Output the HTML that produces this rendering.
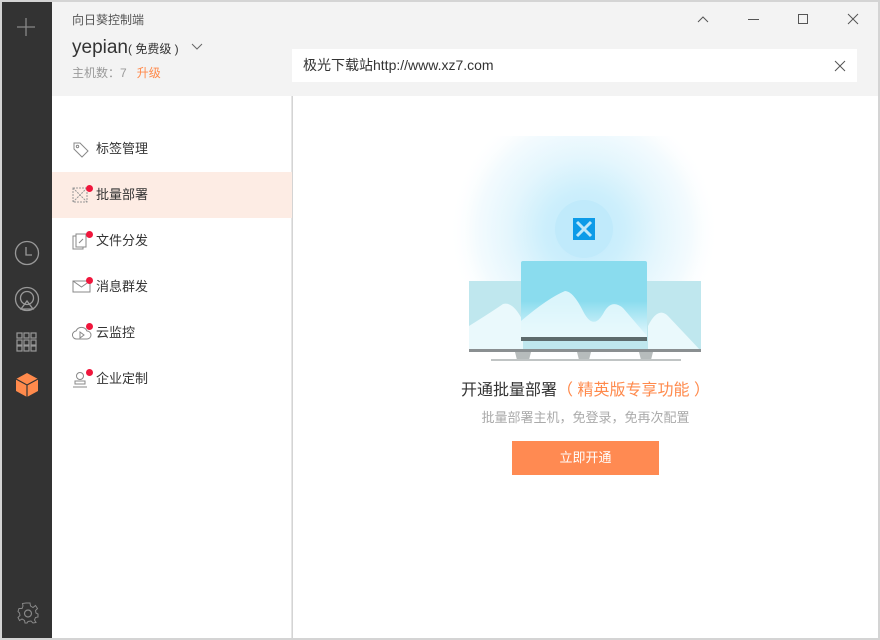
<!DOCTYPE html>
<html><head><meta charset="utf-8"><style>
*{margin:0;padding:0;box-sizing:border-box}
body{width:880px;height:640px;background:#d4d4d4;font-family:"Liberation Sans","Noto Sans CJK SC",sans-serif;position:relative;overflow:hidden}
.abs{position:absolute}
#side{left:2px;top:2px;width:50px;height:636px;background:#333}
#head{left:52px;top:2px;width:826px;height:94px;background:#f3f3f3}
#nav{left:52px;top:96px;width:240px;height:542px;background:#fff;border-right:1px solid #e6e6e6}
#main{left:293px;top:96px;width:585px;height:542px;background:#fff;overflow:hidden}
.item{position:absolute;left:0;width:240px;height:46px;font-size:13px;color:#333;line-height:46px;padding-left:44px}
.item svg{position:absolute;left:20px;top:15px}
.dot{position:absolute;left:34px;top:13px;width:7px;height:7px;border-radius:50%;background:#f0163c}
</style></head><body>
<div id="side" class="abs">
<svg class="abs" style="left:13px;top:14px" width="22" height="22"><path d="M11 2V20M2 11H20" stroke="#888" stroke-width="1.3"/></svg>
<svg class="abs" style="left:12px;top:238px" width="26" height="26" fill="none" stroke="#999" stroke-width="1.3"><circle cx="13" cy="13" r="11.5"/><path d="M12 7V15H18"/></svg>
<svg class="abs" style="left:12px;top:284px" width="26" height="26" fill="none" stroke="#999" stroke-width="1.3"><circle cx="13" cy="13" r="11.5"/><circle cx="13" cy="12" r="6.5"/><path d="M13 15L7 23H19Z"/></svg>
<svg class="abs" style="left:14px;top:330px" width="22" height="20" fill="none" stroke="#999" stroke-width="1.2"><rect x="1" y="1" width="5" height="5"/><rect x="8" y="1" width="5" height="5"/><rect x="15" y="1" width="5" height="5"/><rect x="1" y="8" width="5" height="5"/><rect x="8" y="8" width="5" height="5"/><rect x="15" y="8" width="5" height="5"/><rect x="1" y="14" width="5" height="5"/><rect x="8" y="14" width="5" height="5"/><rect x="15" y="14" width="5" height="5"/></svg>
<svg class="abs" style="left:13px;top:370px" width="24" height="26"><path d="M12 1L23 7V19L12 25L1 19V7Z" fill="#ff8a4c"/><path d="M1 7L12 13L23 7M12 13V25" stroke="#333" stroke-width="1.2" fill="none"/></svg>
<svg class="abs" style="left:15px;top:600px" width="22" height="22" fill="none" stroke="#888" stroke-width="1.2"><path d="M9 1H13L13.5 4L16 5.5L18.5 3.5L20.5 6.5L18.5 8.5L19 11L21 12V15L18.5 15.5L17.5 18L19 20.5L16 21L14 19L11 19.5L10 21H8L7.5 18.5L5 17L2.5 18.5L1 15.5L3 13.5L2.5 11L1 9.5L2 6.5L5 6.5L6 4L5.5 1.5Z" stroke-width="1"/><circle cx="11" cy="11.5" r="3.5"/></svg>
</div>
<div id="head" class="abs">
<div class="abs" style="left:20px;top:9px;font-size:12px;color:#555">向日葵控制端</div>
<div class="abs" style="left:20px;top:35px;font-size:19px;color:#333">yepian<span style="font-size:12px">( 免费级 )</span></div>
<svg class="abs" style="left:139px;top:41px" width="12" height="8"><path d="M1 1L6 6L11 1" stroke="#666" fill="none"/></svg>
<div class="abs" style="left:20px;top:62px;font-size:12px;color:#999">主机数：7 &nbsp;&nbsp;<span style="color:#ff8a4c">升级</span></div>
<svg class="abs" style="left:645px;top:13px" width="12" height="8"><path d="M1 7L6 2L11 7" stroke="#555" fill="none"/></svg>
<div class="abs" style="left:696px;top:17px;width:11px;height:1px;background:#555"></div>
<div class="abs" style="left:746px;top:12px;width:10px;height:10px;border:1px solid #555"></div>
<svg class="abs" style="left:795px;top:11px" width="12" height="12"><path d="M1 1L11 11M11 1L1 11" stroke="#555"/></svg>
<div class="abs" style="left:240px;top:47px;width:565px;height:33px;background:#fff;font-size:14px;color:#333;line-height:33px;padding-left:11px">极光下载站http://www.xz7.com</div>
<svg class="abs" style="left:782px;top:58px" width="12" height="12"><path d="M1 1L11 11M11 1L1 11" stroke="#555"/></svg>
</div>
<div id="nav" class="abs">
<div class="item" style="top:30px"><svg width="18" height="18" fill="none" stroke="#888"><path d="M2 2H8L16 10L10 16L2 8Z"/><circle cx="5.5" cy="5.5" r="1.2"/></svg>标签管理</div>
<div class="item" style="top:76px;background:#fdece4"><svg width="16" height="16" fill="none" stroke="#999"><rect x="1" y="1" width="14" height="14" stroke-dasharray="2 1"/><path d="M1 1L15 15M15 1L1 15" stroke-dasharray="2 1"/></svg><span class="dot"></span>批量部署</div>
<div class="item" style="top:122px"><svg width="16" height="18" fill="none" stroke="#888"><rect x="1" y="3" width="10" height="13"/><rect x="4" y="1" width="10" height="13" fill="#fff"/><path d="M7 10L11 6"/></svg><span class="dot"></span>文件分发</div>
<div class="item" style="top:168px"><svg width="20" height="16" fill="none" stroke="#888"><path d="M1 2H18V13H1Z M1 2L9.5 8L18 2"/></svg><span class="dot"></span>消息群发</div>
<div class="item" style="top:214px"><svg width="20" height="16" fill="none" stroke="#888"><path d="M5 14H15A4 4 0 0 0 15 6A6 6 0 0 0 4 6A4 4 0 0 0 5 14Z"/><path d="M8 7L12 10L8 13Z"/></svg><span class="dot"></span>云监控</div>
<div class="item" style="top:260px"><svg width="16" height="18" fill="none" stroke="#888"><circle cx="8" cy="5" r="3.5"/><path d="M3 10H13V13H3Z M1 16H15"/></svg><span class="dot"></span>企业定制</div>
</div>
<div id="main" class="abs">
<svg class="abs" style="left:150px;top:40px" width="280" height="230">
<defs><radialGradient id="g" cx="50%" cy="50%" r="50%"><stop offset="0" stop-color="#bfe9fb"/><stop offset="0.3" stop-color="#cdeffc"/><stop offset="0.55" stop-color="#e4f6fd"/><stop offset="0.8" stop-color="#f4fbfe"/><stop offset="1" stop-color="#fff" stop-opacity="0"/></radialGradient>
<linearGradient id="m" x1="0" y1="0" x2="0" y2="1"><stop offset="0.5" stop-color="#8adcee"/><stop offset="1" stop-color="#eefafe"/></linearGradient></defs>
<g transform="translate(0,50)">
<circle cx="141" cy="45" r="135" fill="url(#g)"/>
<circle cx="141" cy="43" r="29" fill="#c0eafb"/>
<rect x="130" y="32" width="22" height="22" fill="#0d9be8"/>
<path d="M134 36L148 50M148 36L134 50" stroke="#bfe8fa" stroke-width="3"/>
<rect x="26" y="95" width="232" height="70" fill="#bfe7ee"/>
<path d="M26 140Q50 125 60 118Q70 115 80 135L80 165H26Z M205 140Q215 120 225 130L258 165H205Z" fill="#eaf9fc"/>
<rect x="78" y="75" width="126" height="80" rx="2" fill="url(#m)"/>
<path d="M78 135Q105 112 122 105Q130 105 140 125Q150 145 160 128Q168 112 180 122L204 150V155H78Z" fill="#e9f9fd" opacity=".85"/>
<rect x="26" y="163" width="232" height="3" fill="#8a8f91"/>
<rect x="78" y="151" width="126" height="4" fill="#5d6b6d"/>
<path d="M72 166H88L86 174H74Z M134 166H148L146 174H136Z M196 166H210L208 174H198Z" fill="#b7bcbc"/>
<rect x="48" y="173" width="190" height="2" fill="#c0c4c4"/>
</g>
</svg>
<div class="abs" style="left:0;width:585px;top:280px;text-align:center;font-size:16px;color:#333">开通批量部署<span style="color:#ff8a4c">（ 精英版专享功能 ）</span></div>
<div class="abs" style="left:0;width:585px;top:311px;text-align:center;font-size:13px;color:#aaa">批量部署主机，免登录，免再次配置</div>
<div class="abs" style="left:219px;top:345px;width:147px;height:34px;background:#ff8a52;color:#fff;font-size:13px;text-align:center;line-height:34px">立即开通</div>
</div>
</body></html>
